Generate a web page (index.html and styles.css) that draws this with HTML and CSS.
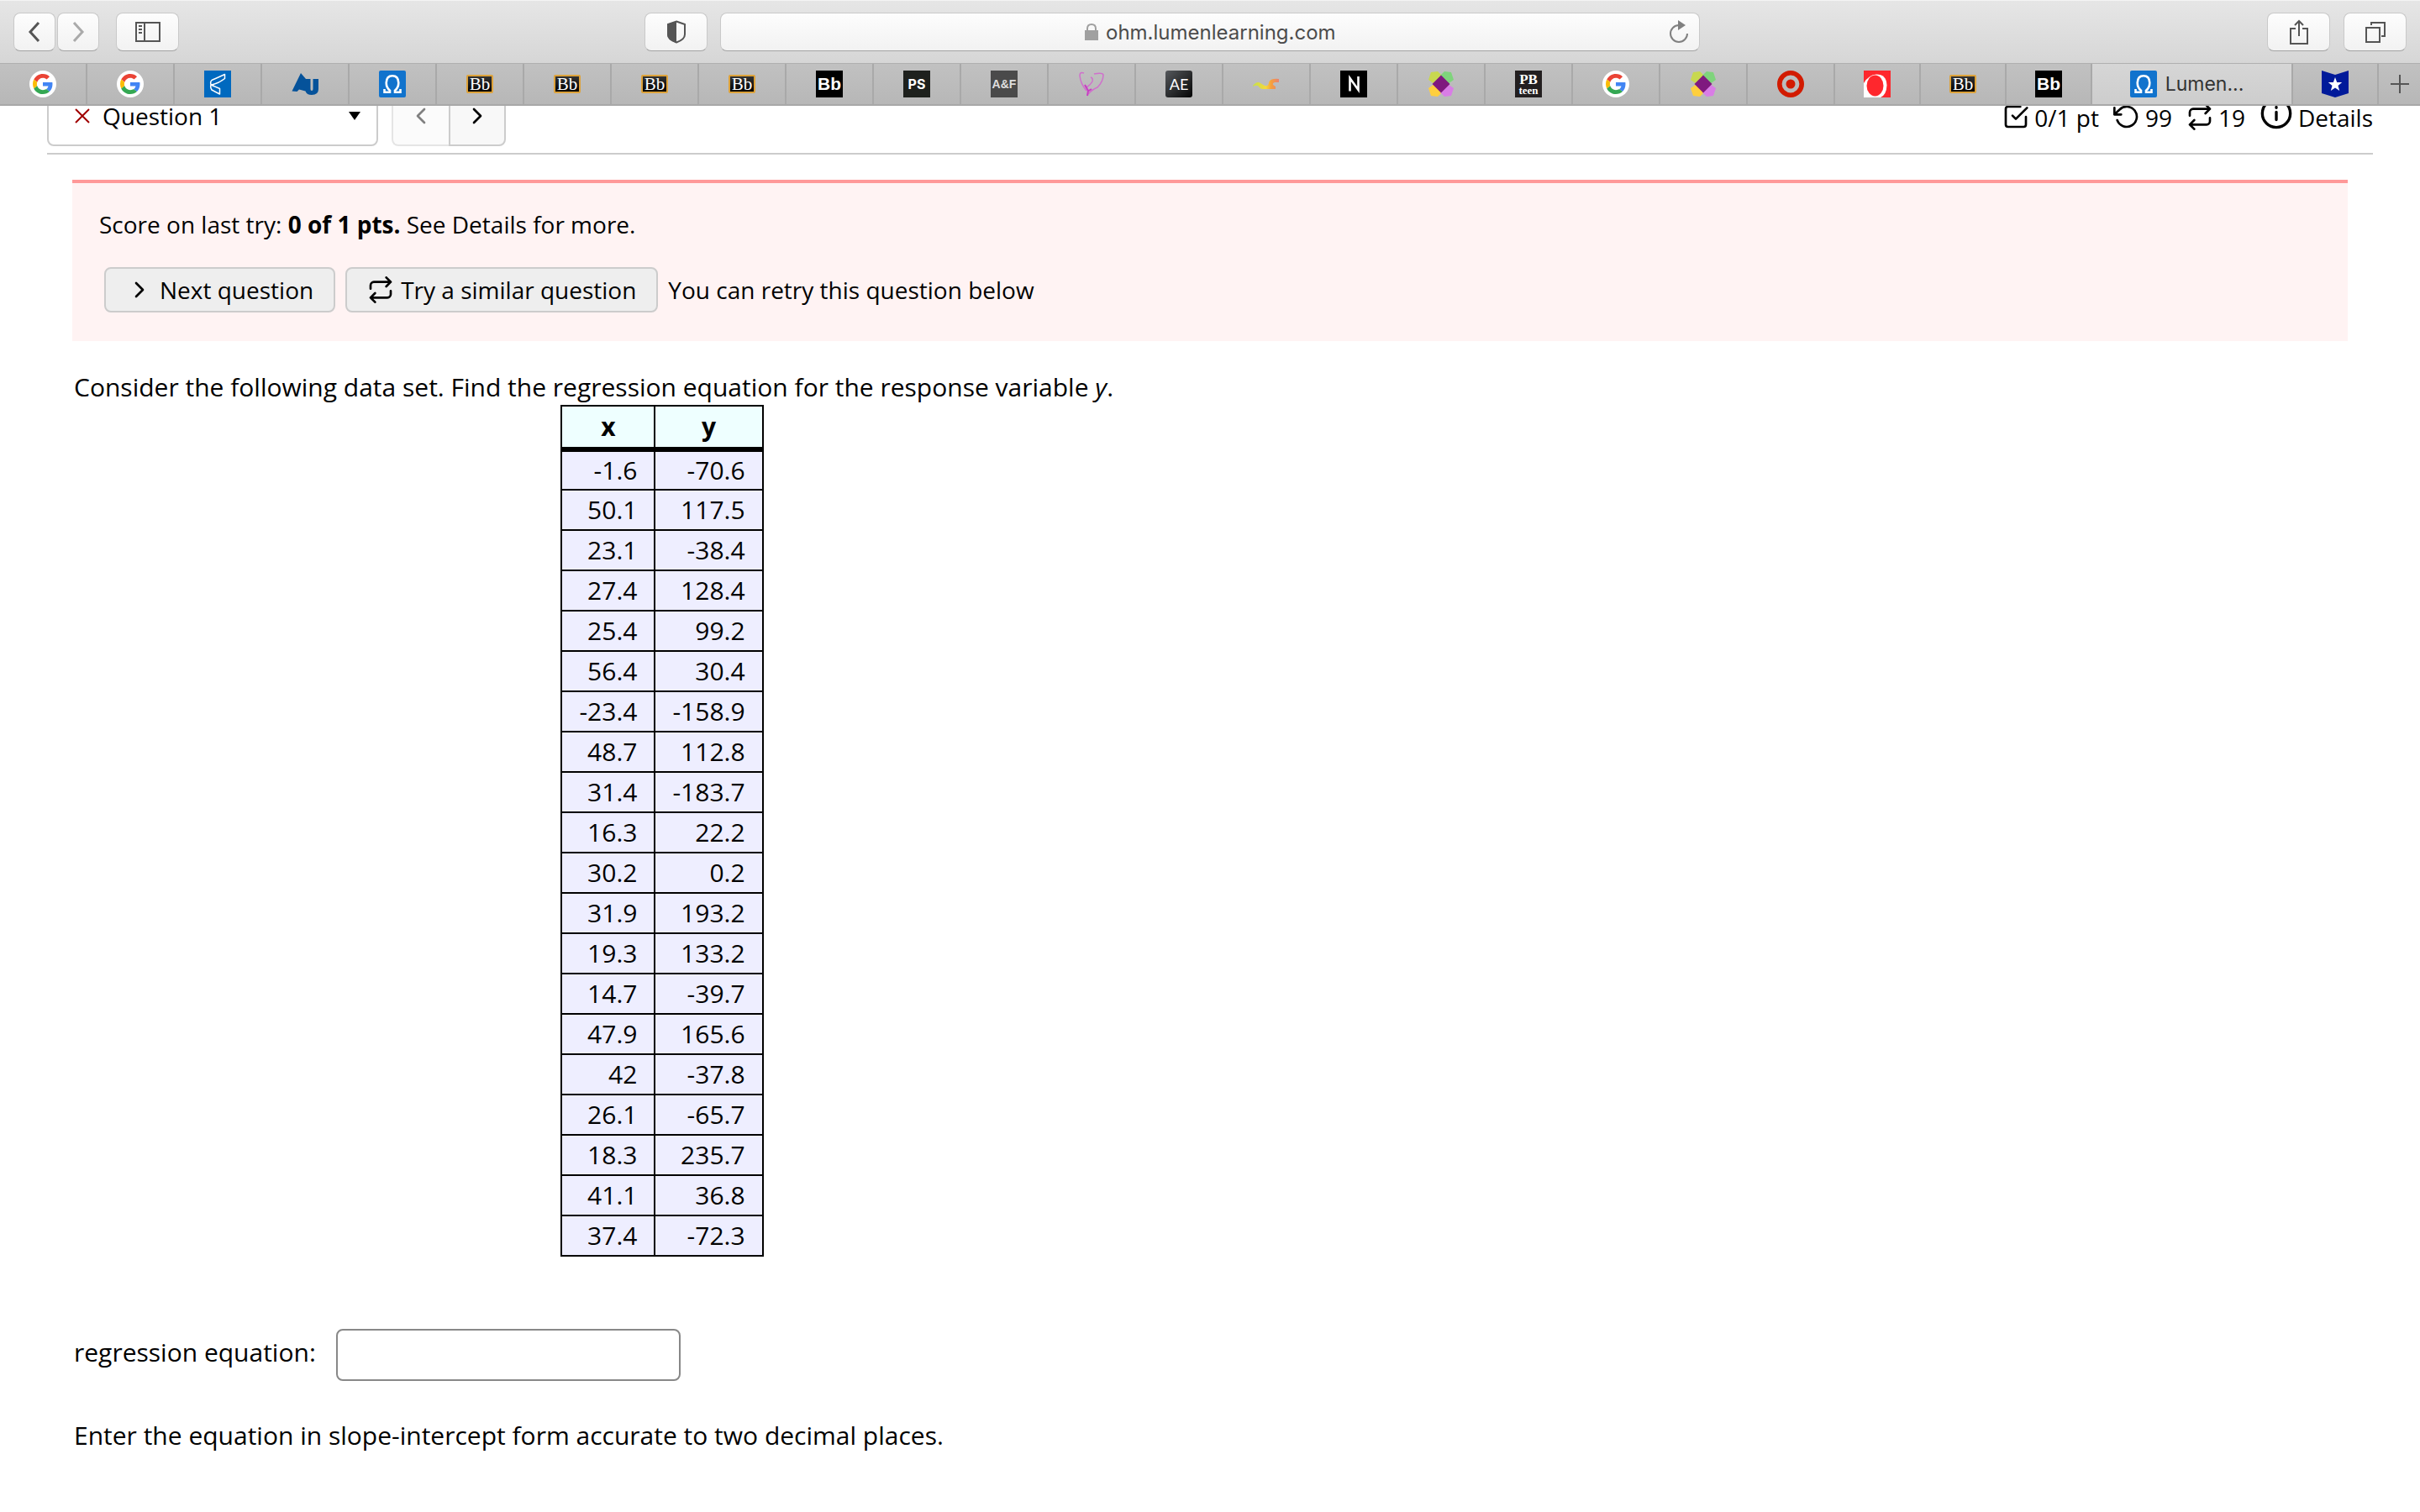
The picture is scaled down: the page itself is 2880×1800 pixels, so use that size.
FILE: index.html
```html
<!DOCTYPE html>
<html lang="en">
<head>
<meta charset="utf-8">
<title>Lumen OHM</title>
<link rel="stylesheet" href="styles.css">
</head>
<body>
<svg class="sprite" aria-hidden="true">
  <symbol id="google" viewBox="0 0 32 32"><circle cx="16" cy="16" r="16" fill="#fff"/><g transform="translate(4 4) scale(.5)"><path fill="#ea4335" d="M24 9.500c3.540 0 6.710 1.220 9.210 3.600l6.850-6.850C35.900 2.380 30.470 0 24 0 14.620 0 6.510 5.380 2.560 13.220l7.980 6.190C12.430 13.720 17.740 9.500 24 9.500z"/><path fill="#4285f4" d="M46.980 24.550c0-1.570-.15-3.090-.38-4.550H24v9.020h12.940c-.58 2.960-2.260 5.480-4.780 7.180l7.730 6c4.510-4.180 7.090-10.360 7.090-17.650z"/><path fill="#fbbc05" d="M10.530 28.590c-.48-1.450-.76-2.990-.76-4.590s.27-3.140.76-4.590l-7.980-6.190C.92 16.460 0 20.120 0 24s.92 7.540 2.560 10.780l7.970-6.190z"/><path fill="#34a853" d="M24 48c6.480 0 11.930-2.130 15.890-5.810l-7.730-6c-2.150 1.450-4.920 2.300-8.160 2.300-6.260 0-11.570-4.220-13.470-9.910l-7.980 6.190C6.510 42.620 14.620 48 24 48z"/></g></symbol>
  <symbol id="ribbon" viewBox="0 0 32 32"><path fill="#0069bf" d="M0 0h32v32H0z"/><path fill="none" stroke="#fff" stroke-width="1.500" stroke-linejoin="round" d="M24.500 4.500 9 11.500Q7 13 8 17q8-1 16.500-7.500zM8 17l10.500 4.500V28L9 23q-2-3-1-6z"/></symbol>
  <symbol id="au" viewBox="0 0 32 32"><path fill="#05529a" d="M.5 24.500 11 3l6 7h5.500v12q0 2 1.500 2t1.500-2V10H32v12q0 7-8 7-6 0-7.500-4.500L9 22.500 6.500 25z"/></symbol>
  <symbol id="omega" viewBox="0 0 32 32"><rect width="32" height="32" rx="2" fill="#1173cd"/><path fill="none" stroke="#fff" stroke-width="2.600" d="M6.500 22v3.700H13v-2Q8.700 20.500 8.700 14.500 9 6.300 16 6.300t7.300 8.200q0 6-4.300 9.200v2h6.500V22"/></symbol>
  <symbol id="heart" viewBox="0 0 32 32"><path fill="none" stroke="#d070cc" stroke-width="1.500" d="M7 3Q2 1 2 6q1 10 8 18m0-4q5-3 7-7 1-4-2-5M19 4q10-2 11 1 0 8-7 15-7 3-11 8"/><path fill="none" stroke="#c93cc4" stroke-width="2" d="m8 17 4 7-1 6m0-5 5-3"/></symbol>
  <symbol id="swirl" viewBox="0 0 32 32"><linearGradient id="swg"><stop stop-color="#c5e04a"/><stop offset=".5" stop-color="#f4d93c"/><stop offset=".7" stop-color="#f7a03b"/><stop offset="1" stop-color="#e98272"/></linearGradient><path fill="url(#swg)" d="M0 18q5-6 9-3l5 3q5 1 5-4 2-5 12-4v4h-5q-5 2 1 5v3H11q-3-1-5-4-3-1-6 1z"/></symbol>
  <symbol id="n" viewBox="0 0 32 32"><path fill="#000" d="M0 0h32v32H0z"/><path fill="none" stroke="#fff" stroke-width="2.600" d="M11.500 24.500V9L21.500 23V7"/></symbol>
  <symbol id="pinwheel" viewBox="0 0 32 32"><path fill="#c8d84f" d="M4 2l8-1 5 5-9 10-7-5z"/><path fill="#7fd47c" d="M28 2l-8-1-5 5 9 10 7-5z"/><path fill="#ffcf3e" d="M4 30l8 1 5-5-9-10-7 5z"/><path fill="#d97de6" d="M28 30l-8 1-5-5 9-10 7 5z"/><path fill="#7f187f" d="M16 5.500 26.500 16 16 26.500 5.500 16z"/></symbol>
  <symbol id="target" viewBox="0 0 32 32"><circle cx="16" cy="16" r="13.200" fill="none" stroke="#d21b00" stroke-width="5.600"/><circle cx="16" cy="16" r="5.500" fill="#d21b00"/></symbol>
  <symbol id="oval" viewBox="0 0 32 32"><path fill="#ff272d" d="M0 0h32v32H0z"/><path fill="#fff" d="M0 15Q6 5 15 4.500q12 0 12.500 13Q27 29 20 32H0z"/><ellipse cx="13.500" cy="18" rx="10" ry="12.500" fill="#ff272d"/></symbol>
  <symbol id="badge" viewBox="0 0 32 32"><path fill="#001a9a" d="m0 0 16 5 16-5v27l-16 5-16-5z"/><path fill="#fff" d="m16 8 2.200 6h6l-4.700 4 1.700 6-5.200-3.500-5.200 3.500 1.700-6-4.700-4h6z"/></symbol>
  <symbol id="repeat" viewBox="0 0 24 24"><path d="m17 1 4 4-4 4M3 11V8a3 3 0 0 1 3-3h15M7 23l-4-4 4-4M21 13v3a3 3 0 0 1-3 3H3"/></symbol>
  <symbol id="left" viewBox="0 0 24 24"><path d="m15 18-6-6 6-6"/></symbol>
  <symbol id="right" viewBox="0 0 24 24"><path d="m9 18 6-6-6-6"/></symbol>
</svg>

<header class="browser">
  <div class="toolbar">
    <div class="tools">
      <div class="history">
        <button class="tool nav" aria-label="Back"><svg width="16" height="26" viewBox="0 0 16 26"><path d="M13 2 3 13l10 11" stroke-width="3"/></svg></button>
        <button class="tool nav off" aria-label="Forward"><svg width="16" height="26" viewBox="0 0 16 26"><path d="m3 2 10 11L3 24" stroke-width="3"/></svg></button>
      </div>
      <button class="tool" aria-label="Sidebar"><svg width="30" height="24" viewBox="0 0 30 24"><path d="M1 1h28v22H1zM11 1v22M4 5h4M4 9h4M4 13h4"/></svg></button>
    </div>
    <div class="middle">
      <button class="tool" aria-label="Privacy report"><svg width="24" height="28" viewBox="0 0 24 28"><path d="M12 1.500 22 5v12q0 6-10 9.500Q2 23 2 17V5z"/><path class="solid" d="M12 1 1 5v12q0 7 11 10z"/></svg></button>
      <div class="address">
        <svg class="lock" width="16" height="20" viewBox="0 0 16 20"><path class="solid" d="M0 8h16v12H0z"/><path d="M3 9V6q0-5 5-5t5 5v3"/></svg>
        <input class="url" aria-label="Address" value="ohm.lumenlearning.com">
        <button class="reload" aria-label="Reload"><svg width="24" height="28" viewBox="0 0 24 28"><path d="M12 6A10 10 0 1 0 22 16"/><path class="solid" d="m11 0 9 6-9 6z"/></svg></button>
      </div>
    </div>
    <div class="tools end">
      <button class="tool" aria-label="Share"><svg width="24" height="32" viewBox="0 0 24 32"><path d="M8 12H2v18h20V12h-6M12 21V3M7 8l5-5 5 5"/></svg></button>
      <button class="tool" aria-label="Show tabs"><svg width="26" height="26" viewBox="0 0 26 26"><path d="M2 8h16v17H2zM8 5V2h16v16h-4"/></svg></button>
    </div>
  </div>
  <nav class="tabs" aria-label="Tabs">
    <a class="tab" href="#" aria-label="Google"><svg class="fav"><use href="#google"/></svg></a>
    <a class="tab" href="#" aria-label="Google"><svg class="fav"><use href="#google"/></svg></a>
    <a class="tab" href="#" aria-label="Portal"><svg class="fav"><use href="#ribbon"/></svg></a>
    <a class="tab" href="#" aria-label="University"><svg class="fav"><use href="#au"/></svg></a>
    <a class="tab" href="#" aria-label="Lumen"><svg class="fav"><use href="#omega"/></svg></a>
    <a class="tab" href="#"><span class="mark-icon gold">Bb</span></a>
    <a class="tab" href="#"><span class="mark-icon gold">Bb</span></a>
    <a class="tab" href="#"><span class="mark-icon gold">Bb</span></a>
    <a class="tab" href="#"><span class="mark-icon gold">Bb</span></a>
    <a class="tab" href="#"><span class="mark-icon">Bb</span></a>
    <a class="tab" href="#"><span class="mark-icon ps">PS</span></a>
    <a class="tab" href="#"><span class="mark-icon af">A&amp;F</span></a>
    <a class="tab" href="#" aria-label="Heart"><svg class="fav"><use href="#heart"/></svg></a>
    <a class="tab" href="#"><span class="mark-icon ae">AE</span></a>
    <a class="tab" href="#" aria-label="Swirl"><svg class="fav"><use href="#swirl"/></svg></a>
    <a class="tab" href="#" aria-label="N"><svg class="fav"><use href="#n"/></svg></a>
    <a class="tab" href="#" aria-label="Wayfair"><svg class="fav"><use href="#pinwheel"/></svg></a>
    <a class="tab" href="#"><span class="mark-icon pb">PB<small class="teen">teen</small></span></a>
    <a class="tab" href="#" aria-label="Google"><svg class="fav"><use href="#google"/></svg></a>
    <a class="tab" href="#" aria-label="Wayfair"><svg class="fav"><use href="#pinwheel"/></svg></a>
    <a class="tab" href="#" aria-label="Target"><svg class="fav"><use href="#target"/></svg></a>
    <a class="tab" href="#" aria-label="Overstock"><svg class="fav"><use href="#oval"/></svg></a>
    <a class="tab" href="#"><span class="mark-icon gold">Bb</span></a>
    <a class="tab" href="#"><span class="mark-icon">Bb</span></a>
    <a class="tab active" href="#" aria-current="page"><svg class="fav"><use href="#omega"/></svg>Lumen...</a>
    <a class="tab" href="#" aria-label="Badge"><svg class="fav"><use href="#badge"/></svg></a>
    <button class="new-tab" aria-label="New tab"><svg width="22" height="22" viewBox="0 0 22 22"><path d="M11 0v22M0 11h22"/></svg></button>
  </nav>
</header>

<main class="page">
  <div class="question-bar">
    <div class="picker">
      <svg class="wrong" width="18" height="18" viewBox="0 0 18 18"><path d="m1 1 16 16M17 1 1 17"/></svg>
      <select class="picker-select" aria-label="Question"><option>Question 1</option></select>
      <svg class="caret" width="14" height="10" viewBox="0 0 14 10"><path d="M0 0h14L7 10z"/></svg>
    </div>
    <div class="pager">
      <button class="page-btn" disabled aria-label="Previous question"><svg class="icon"><use href="#left"/></svg></button>
      <button class="page-btn" aria-label="Following question"><svg class="icon"><use href="#right"/></svg></button>
    </div>
    <div class="stats">
      <span class="stat"><svg class="icon" viewBox="0 0 24 24"><path d="m9 11 3 3L22 4M21 12v7a2 2 0 0 1-2 2H5a2 2 0 0 1-2-2V5a2 2 0 0 1 2-2h11"/></svg>0/1 pt</span>
      <span class="stat"><svg class="icon" viewBox="0 0 24 24"><path d="M1 4v6h6M3.500 15A9 9 0 1 0 5.600 5.600L1 10"/></svg>99</span>
      <span class="stat"><svg class="icon"><use href="#repeat"/></svg>19</span>
      <a class="stat" href="#"><svg class="icon info" viewBox="0 0 24 24"><circle cx="12" cy="12" r="10"/><path d="M12 16.500V11M12 7.500v.5"/></svg>Details</a>
    </div>
  </div>

  <div class="content">
    <section class="alert">
      <p class="score">Score on last try: <b>0 of 1 pts.</b> See Details for more.</p>
      <div class="actions">
        <button class="action"><svg class="icon"><use href="#right"/></svg>Next question</button>
        <button class="action"><svg class="icon"><use href="#repeat"/></svg>Try a similar question</button>
        <span>You can retry this question below</span>
      </div>
    </section>

    <section class="question">
      <p>Consider the following data set. Find the regression equation for the response variable <i>y</i>.</p>
      <table class="data">
        <thead><tr><th scope="col">x</th><th scope="col">y</th></tr></thead>
        <tbody>
          <tr><td>-1.6</td><td>-70.6</td></tr>
          <tr><td>50.1</td><td>117.5</td></tr>
          <tr><td>23.1</td><td>-38.4</td></tr>
          <tr><td>27.4</td><td>128.4</td></tr>
          <tr><td>25.4</td><td>99.2</td></tr>
          <tr><td>56.4</td><td>30.4</td></tr>
          <tr><td>-23.4</td><td>-158.9</td></tr>
          <tr><td>48.7</td><td>112.8</td></tr>
          <tr><td>31.4</td><td>-183.7</td></tr>
          <tr><td>16.3</td><td>22.2</td></tr>
          <tr><td>30.2</td><td>0.2</td></tr>
          <tr><td>31.9</td><td>193.2</td></tr>
          <tr><td>19.3</td><td>133.2</td></tr>
          <tr><td>14.7</td><td>-39.7</td></tr>
          <tr><td>47.9</td><td>165.6</td></tr>
          <tr><td>42</td><td>-37.8</td></tr>
          <tr><td>26.1</td><td>-65.7</td></tr>
          <tr><td>18.3</td><td>235.7</td></tr>
          <tr><td>41.1</td><td>36.8</td></tr>
          <tr><td>37.4</td><td>-72.3</td></tr>
        </tbody>
      </table>
      <div class="answer">
        <label class="answer-label" for="equation">regression equation:</label>
        <input class="answer-input" id="equation" type="text">
      </div>
      <p>Enter the equation in slope-intercept form accurate to two decimal places.</p>
    </section>
  </div>
</main>
</body>
</html>
```
FILE: styles.css
```css
* { box-sizing: border-box; }

body {
  margin: 0;
  background: #fff;
  color: #000;
  font-family: "Open Sans", sans-serif;
  font-size: 28px;
  line-height: 38px;
}

p { margin: 0; }
a { color: inherit; text-decoration: none; }
button, input, select { font: inherit; color: inherit; margin: 0; }
svg { flex: none; fill: none; stroke: currentColor; stroke-width: 2; }
.sprite { position: absolute; width: 0; height: 0; }

/* Browser chrome */
.browser {
  position: relative;
  z-index: 1;
  font-family: Inter, sans-serif;
  color: #555;
}

.toolbar {
  display: grid;
  grid-template-columns: 751fr 1256fr 841fr;
  align-items: center;
  height: 75px;
  padding: 0 16px;
  background: linear-gradient(#e6e6e6, #d6d6d6);
  border-top: 1px solid #f4f4f4;
}

.tools { display: flex; gap: 20px; }
.tools.end { justify-content: flex-end; gap: 16px; }
.history { display: flex; gap: 2px; }
.middle { display: flex; gap: 15px; }

.tool, .address {
  display: flex;
  align-items: center;
  justify-content: center;
  height: 46px;
  padding: 0;
  border: 1px solid #c9c9c9;
  border-bottom-color: #a3a3a3;
  border-radius: 8px;
  background: linear-gradient(#fdfdfd, #f2f2f2);
}

.tool { width: 75px; }
.tool.nav { width: 50px; }
.tool.off { color: #aaa; }
.solid { fill: currentColor; stroke: none; }

.address {
  flex: 1;
  display: grid;
  grid-template-columns: 1fr 274px 1fr;
  gap: 9px;
  padding: 0 12px 0 38px;
}
.lock { justify-self: end; color: #a0a0a0; }
.url {
  width: 100%;
  padding: 2px 0 0;
  border: 0;
  background: none;
  color: #4c4c4c;
  font-size: 24px;
  line-height: 32px;
}
.reload {
  display: flex;
  justify-self: end;
  padding: 0;
  border: 0;
  background: none;
  color: #808080;
}

.tabs {
  display: grid;
  grid-template-columns: repeat(21, 104fr) repeat(3, 102fr) 239fr 102fr 49fr;
  height: 51px;
  border-top: 1px solid #b0b0b0;
  border-bottom: 2px solid #a8a8a8;
  background: linear-gradient(#c1c1c1, #b7b7b7);
}
.tab {
  display: flex;
  align-items: center;
  justify-content: center;
  gap: 10px;
  min-width: 0;
  border-right: 2px solid #a9a9a9;
  font-size: 23px;
  color: #333;
}
.tab.active { padding-right: 12px; background: linear-gradient(#d6d6d6, #cdcdcd); }
.fav { width: 32px; height: 32px; stroke: none; }

/* Favicons made of letters */
.mark-icon {
  display: flex;
  flex-direction: column;
  align-items: center;
  justify-content: center;
  width: 32px;
  height: 32px;
  background: #000;
  color: #fff;
  font: bold 21px/24px "Liberation Sans", sans-serif;
}
.mark-icon.gold {
  height: 22px;
  border: 2px solid #dda23a;
  border-radius: 2px;
  background: linear-gradient(#333, #000);
  font: 21px/18px "Liberation Serif", serif;
}
.mark-icon.ps { background: #1e211d; font: bold 16px/20px Inter, sans-serif; }
.mark-icon.af { background: #4a4a4a; color: #ddd; font-size: 14px; }
.mark-icon.ae {
  border-radius: 3px;
  background: linear-gradient(135deg, #55585c, #050505);
  font: 18px/20px Lato, sans-serif;
}
.mark-icon.pb { background: #231f20; font: bold 17px/14px "Liberation Serif", serif; }
.teen { font-size: 13px; line-height: 11px; }

.new-tab {
  display: flex;
  align-items: center;
  justify-content: center;
  padding: 0;
  border: 0;
  background: none;
}

/* Question bar, scrolled partly under the chrome */
.page { padding: 0 56px; }

.question-bar {
  display: flex;
  margin-top: -24px;
  padding-bottom: 8px;
  border-bottom: 2px solid #ccc;
}

.icon {
  width: 32px;
  height: 32px;
  stroke-width: 2;
  stroke-linecap: round;
  stroke-linejoin: round;
}

.picker {
  display: flex;
  align-items: center;
  width: 394px;
  height: 72px;
  margin-right: 16px;
  padding: 0 19px 0 31px;
  border: 2px solid #ccc;
  border-radius: 8px;
}
.wrong { stroke: #a00000; }
.picker-select {
  flex: 1;
  margin-left: 15px;
  padding: 0;
  border: 0;
  background: none;
  appearance: none;
}
.caret { fill: #000; stroke: none; }

.pager { display: flex; }
.page-btn {
  display: flex;
  align-items: center;
  justify-content: center;
  width: 68px;
  padding: 0;
  border: 2px solid #ccc;
  border-radius: 0 8px 8px 0;
  background: #f8f8f8;
}
.page-btn:disabled {
  border-color: #e5e5e5;
  border-right: 0;
  border-radius: 8px 0 0 8px;
  background: #fbfbfb;
  color: #808080;
}

.stats {
  display: flex;
  align-items: flex-end;
  gap: 17px;
  margin-left: auto;
  padding-bottom: 19px;
}
.stat {
  display: flex;
  align-items: flex-end;
  gap: 6px;
  line-height: 30px;
}
.icon.info { width: 40px; height: 40px; }

/* Question content */
.content { padding: 30px; }

.alert {
  padding: 30px 32px 34px;
  border-top: 4px solid #ff9999;
  background: #fff3f3;
}
.actions {
  display: flex;
  align-items: center;
  gap: 12px;
  margin: 32px 0 0 6px;
}
.action {
  display: flex;
  align-items: center;
  gap: 8px;
  height: 54px;
  padding: 0 24px;
  border: 2px solid #ccc;
  border-radius: 8px;
  background: #eee;
}

.question {
  max-width: 1402px;
  padding: 34px 0 0 2px;
  font-size: 30px;
  line-height: 42px;
}

.data {
  margin: 0 auto;
  border-collapse: collapse;
}
.data th, .data td {
  height: 48px;
  padding: 0 20px;
  border: 2px solid #000;
}
.data th {
  height: 52px;
  border-bottom-width: 6px;
  background: #eff;
}
.data td {
  background: #eef;
  text-align: right;
}

.answer {
  display: flex;
  gap: 24px;
  margin: 86px 0 44px;
}
.answer-label { line-height: 56px; }
.answer-input {
  width: 410px;
  height: 62px;
  padding: 0 12px;
  border: 2px solid #888;
  border-radius: 8px;
}
```
